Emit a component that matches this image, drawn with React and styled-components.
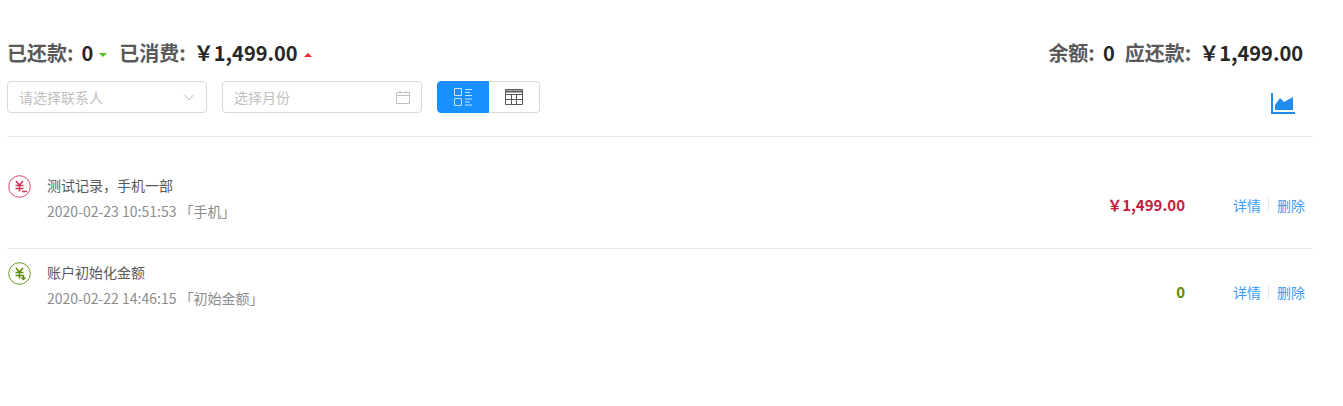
import React from 'react';
import styled, { createGlobalStyle } from 'styled-components';

const GlobalStyle = createGlobalStyle`
  html, body {
    margin: 0;
    padding: 0;
    background: #fff;
    font-family: "Noto Sans CJK SC", "Noto Sans", sans-serif;
  }
`;

const Page = styled.div`
  width: 1306px;
  margin-left: 7px;
  padding-top: 35px;
`;

const Summary = styled.div`
  display: flex;
  justify-content: space-between;
  height: 36px;
  padding: 0 10px 0 0;
  align-items: center;
`;

const StatGroup = styled.div`
  display: flex;
  align-items: center;
  gap: ${(p) => p.$gap}px;
`;

const Stat = styled.div`
  display: flex;
  align-items: center;
  font-size: 20px;
  line-height: 36px;
  font-weight: 700;
  color: #595959;
`;

const StatValue = styled.span`
  color: #262626;
  margin-left: 8px;
  font-weight: 700;
  font-size: 20px;
`;

const Trend = styled.span`
  width: 0;
  height: 0;
  margin: 4px 0 0 6px;
  border-left: 4px solid transparent;
  border-right: 4px solid transparent;
  border-top: ${(p) => (p.$up ? 0 : '4px solid #52c41a')};
  border-bottom: ${(p) => (p.$up ? '4px solid #f5222d' : 0)};
`;

const Controls = styled.div`
  display: flex;
  align-items: flex-start;
  justify-content: space-between;
  height: 55px;
  margin-top: 10px;
  border-bottom: 1px solid #e8e8e8;
`;

const Filters = styled.div`
  display: flex;
  gap: 15px;
`;

const Field = styled.div`
  width: 200px;
  height: 32px;
  box-sizing: border-box;
  display: flex;
  align-items: center;
  justify-content: space-between;
  padding: 0 11px;
  border: 1px solid #d9d9d9;
  border-radius: 4px;
  font-size: 14px;
  color: #bfbfbf;
`;

const Toggle = styled.div`
  display: flex;
  height: 32px;
`;

const ToggleButton = styled.div`
  width: ${(p) => (p.$active ? '52px' : '51px')};
  box-sizing: border-box;
  display: flex;
  align-items: center;
  justify-content: center;
  background: ${(p) => (p.$active ? '#1890ff' : '#fff')};
  border: 1px solid ${(p) => (p.$active ? '#1890ff' : '#d9d9d9')};
  border-left-width: ${(p) => (p.$active ? '1px' : 0)};
  border-radius: ${(p) => (p.$active ? '4px 0 0 4px' : '0 4px 4px 0')};
`;

const ChartButton = styled.div`
  margin: 12px 18px 0 0;
  width: 24px;
  height: 22px;
`;

const List = styled.div`
  padding-top: 25px;
`;

const Row = styled.div`
  display: flex;
  align-items: flex-start;
  height: 74px;
  padding: 12px 8px 0 0;
  border-bottom: ${(p) => (p.$last ? 'none' : '1px solid #e8e8e8')};
`;

const RowIcon = styled.div`
  width: 23px;
  height: 23px;
  margin: 1px 16px 0 1px;
  flex: none;
`;

const RowBody = styled.div`
  flex: 1;
  margin-top: -1px;
`;

const RowTitle = styled.div`
  font-size: 14px;
  line-height: 24px;
  color: #595959;
`;

const RowMeta = styled.div`
  margin-top: 2px;
  font-size: 14px;
  line-height: 24px;
  color: #8c8c8c;
`;

const Amount = styled.div`
  margin: 20px 48px 0 0;
  font-size: 15px;
  line-height: 22px;
  font-weight: 700;
  color: ${(p) => p.$color};
`;

const Actions = styled.div`
  display: flex;
  align-items: center;
  margin-top: 20px;
  height: 22px;
`;

const ActionLink = styled.a`
  font-size: 14px;
  line-height: 22px;
  color: #3b9dfa;
`;

const ActionDivider = styled.span`
  width: 1px;
  height: 14px;
  margin: 0 8px 2px 7px;
  background: #e8e8e8;
`;

const Caret = () => (
  <svg width="12" height="12" viewBox="0 0 12 12" fill="none" stroke="#bfbfbf" strokeWidth="1">
    <path d="M1 3.500 6 9l5-5.500" />
  </svg>
);

const CalendarIcon = () => (
  <svg width="14" height="14" viewBox="0 0 14 14" fill="none" stroke="#bfbfbf" strokeWidth="1">
    <path d="M.5 2.500h13v11H.5zM.5 5.500h13M4 .5v3M10 .5v3" />
  </svg>
);

const ListIcon = () => (
  <svg width="18" height="18" viewBox="0 0 18 18" fill="none" stroke="#c5e3ff" strokeWidth="1">
    <path d="M.5.500h7v7H.5zM.5 10.500h7v7H.5zM11 1.500h7M11 4.500h5M11 7.500h7M11 11h7M11 14h5M11 17h7" />
  </svg>
);

const TableIcon = () => (
  <svg width="18" height="16" viewBox="0 0 18 16" fill="none" stroke="#595959" strokeWidth="1">
    <path d="M.5.500h17v15H.500zM.5 5.500h17M.5 10.500h17M6.500 5.500v10M11.500 5.500v10" />
    <path d="M0 2.500h18" strokeWidth="2" />
  </svg>
);

const AreaIcon = () => (
  <svg width="24" height="22" viewBox="0 0 24 22" fill="#1f8cee">
    <path d="M0 0h2v19h22v2H0z" />
    <path d="M4 17v-5l5-7 4 4 9-5v13z" />
  </svg>
);

const CoinIcon = ({ color, kind }) => (
  <svg width="23" height="23" viewBox="0 0 23 23" fill="none" stroke={color}>
    <circle cx="11.500" cy="11.500" r="10.800" strokeWidth="0.900" />
    <path d="M8 6l3.500 4 3.500-4M7.500 10.500h8M7.500 13.500h8M11.500 10.500v6" strokeWidth="1.500" />
    {kind === 'minus' ? (
      <path d="M14 16.500h5" strokeWidth="1.500" />
    ) : (
      <path d="M15.500 13v4M13.500 15.500l2 2 2-2" strokeWidth="1.300" />
    )}
  </svg>
);

const records = [
  {
    title: '测试记录，手机一部',
    meta: '2020-02-23 10:51:53 「手机」',
    amount: '￥1,499.00',
    color: '#c41d3f',
    iconColor: '#d0345a',
    kind: 'minus',
  },
  {
    title: '账户初始化金额',
    meta: '2020-02-22 14:46:15 「初始金额」',
    amount: '0',
    color: '#5b8c00',
    iconColor: '#5b8c00',
    kind: 'plus',
  },
];

export default function App() {
  return (
    <>
      <GlobalStyle />
      <Page>
        <Summary>
          <StatGroup $gap={12}>
            <Stat>
              已还款:<StatValue>0</StatValue>
              <Trend />
            </Stat>
            <Stat>
              已消费:<StatValue>￥1,499.00</StatValue>
              <Trend $up />
            </Stat>
          </StatGroup>
          <StatGroup $gap={10}>
            <Stat>
              余额:<StatValue>0</StatValue>
            </Stat>
            <Stat>
              应还款:<StatValue>￥1,499.00</StatValue>
            </Stat>
          </StatGroup>
        </Summary>
        <Controls>
          <Filters>
            <Field>
              请选择联系人
              <Caret />
            </Field>
            <Field>
              选择月份
              <CalendarIcon />
            </Field>
            <Toggle>
              <ToggleButton $active>
                <ListIcon />
              </ToggleButton>
              <ToggleButton>
                <TableIcon />
              </ToggleButton>
            </Toggle>
          </Filters>
          <ChartButton>
            <AreaIcon />
          </ChartButton>
        </Controls>
        <List>
          {records.map((r, i) => (
            <Row key={r.title} $last={i === records.length - 1}>
              <RowIcon>
                <CoinIcon color={r.iconColor} kind={r.kind} />
              </RowIcon>
              <RowBody>
                <RowTitle>{r.title}</RowTitle>
                <RowMeta>{r.meta}</RowMeta>
              </RowBody>
              <Amount $color={r.color}>{r.amount}</Amount>
              <Actions>
                <ActionLink>详情</ActionLink>
                <ActionDivider />
                <ActionLink>删除</ActionLink>
              </Actions>
            </Row>
          ))}
        </List>
      </Page>
    </>
  );
}
